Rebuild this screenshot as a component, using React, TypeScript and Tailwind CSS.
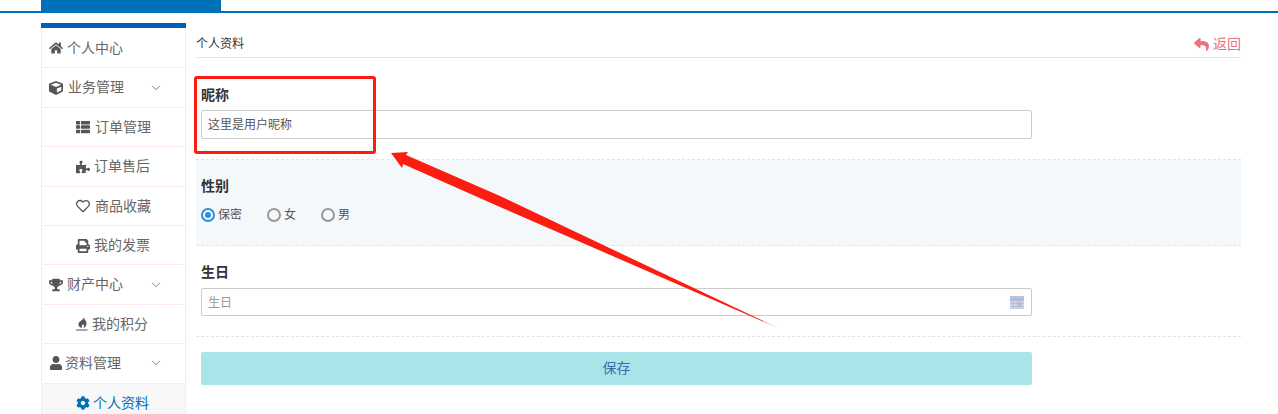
import React from 'react'
import { FaHome, FaCube, FaThList, FaPuzzlePiece, FaRegHeart, FaPrint, FaTrophy, FaUser, FaCog, FaReply } from 'react-icons/fa'
import { ChevronDown } from 'lucide-react'

function Flame() {
  return (
    <svg viewBox="0 0 12 14" className="h-[14px] w-[12px]" fill="#555">
      <path d="M8 0c-.2 2 2.500 3.500 2.500 6.500 0 2.500-1.500 4-3 4.500.8-1.500.5-3-.5-4-.3 1-1 1.200-1.200 2.400-.1.700.1 1.200.4 1.600C3.500 10.500 2 9 2.500 6.500 3 4 7.500 3 8 0z" />
      <rect x="0" y="12.500" width="11.500" height="1" />
    </svg>
  )
}

function MenuRow({ icon, box, label, sub, open, active }: { icon: React.ReactNode; box: string; label: string; sub?: boolean; open?: boolean; active?: boolean }) {
  return (
    <div className={`flex h-[39.4px] shrink-0 items-center border-b border-[#fde8ef] text-[14px] ${sub ? 'pl-[34px] pt-[1px]' : 'pl-[7px]'} ${active ? 'bg-[#f7f7f7] text-[#0070b8]' : 'text-[#666]'}`}>
      <span className={`flex shrink-0 text-[14px] ${active ? 'text-[#0070b8]' : 'text-[#555]'} ${box}`}>{icon}</span>
      <span>{label}</span>
      {open && <ChevronDown size={14} strokeWidth={1.4} className="ml-auto mr-[22px] text-[#666]" />}
    </div>
  )
}

function Sidebar() {
  return (
    <aside className="w-[145px] shrink-0">
      <div className="h-[5px] bg-[#0060b8]" />
      <div className="flex flex-col border-x border-[#fde8ef] pt-[1px]">
        <MenuRow icon={<FaHome />} box="w-[18px]" label="个人中心" />
        <MenuRow icon={<FaCube />} box="w-[19px]" label="业务管理" open />
        <MenuRow icon={<FaThList />} box="w-[19px]" label="订单管理" sub />
        <MenuRow icon={<FaPuzzlePiece />} box="w-[18px]" label="订单售后" sub />
        <MenuRow icon={<FaRegHeart />} box="w-[19px]" label="商品收藏" sub />
        <MenuRow icon={<FaPrint />} box="w-[18px]" label="我的发票" sub />
        <MenuRow icon={<FaTrophy />} box="w-[18px]" label="财产中心" open />
        <MenuRow icon={<Flame />} box="w-[16px]" label="我的积分" sub />
        <MenuRow icon={<FaUser />} box="w-[16px]" label="资料管理" open />
        <MenuRow icon={<FaCog />} box="w-[17px]" label="个人资料" sub active />
      </div>
    </aside>
  )
}

function Radio({ label, checked }: { label: string; checked?: boolean }) {
  return (
    <label className="flex items-center gap-[3px] text-[12px] text-[#555]">
      <span className={`flex h-[14px] w-[14px] items-center justify-center rounded-full border-2 ${checked ? 'border-[#2a8fdc]' : 'border-[#999]'}`}>
        {checked && <span className="h-[6px] w-[6px] rounded-full bg-[#2a8fdc]" />}
      </span>
      {label}
    </label>
  )
}

function CalendarIcon() {
  return (
    <svg viewBox="0 0 14 13" className="h-[13px] w-[14px]">
      <rect x="0" y="0" width="14" height="3" fill="#c4c4c8" />
      <rect x="0" y="2" width="14" height="3" fill="#a5bfe6" />
      <rect x="0" y="5" width="14" height="8" fill="#c9d6ea" />
      <path d="M0 7.500h14M0 10.500h14M3.500 5v8M7 5v8M10.500 5v8" stroke="#a9b8d0" strokeWidth="0.6" />
      <rect x="8" y="6" width="3.500" height="4" fill="#e8a8a0" />
    </svg>
  )
}

export default function App() {
  return (
    <div className="relative h-[414px] w-[1278px] overflow-hidden bg-white font-['Liberation_Sans','Noto_Sans_CJK_SC',sans-serif]">
      {/* top nav, scrolled off */}
      <div className="h-[13px] border-b-2 border-[#0070b8]">
        <div className="ml-[41px] flex h-[13px] w-[180px] items-end justify-center overflow-hidden bg-[#0070b8]">
          <span className="mb-[12px] shrink-0 text-[16px] font-bold leading-[18px] text-white">我的商城</span>
        </div>
      </div>

      <div className="mt-[10px] flex pl-[41px] pr-[37px]">
        <Sidebar />
        <main className="ml-[10px] flex-1">
          <div className="flex h-[35px] items-center justify-between border-b border-[#e5e5e5] pt-[8px] text-[12px] text-[#333]">
            <span>个人资料</span>
            <a className="flex items-center gap-[4px] text-[14px] text-[#e9737f]">
              <FaReply className="text-[15px]" />
              返回
            </a>
          </div>

          <section className="h-[102px] border-b border-dashed border-[#dfe5ea] px-[5px] pt-[28px]">
            <div className="text-[14px] font-bold leading-[18px] text-[#333]">昵称</div>
            <div className="mt-[6px] flex h-[29px] w-[831px] items-center rounded-[2px] border border-[#ccc] px-[6px] text-[12px] text-[#555]">这里是用户昵称</div>
          </section>

          <section className="h-[86px] border-b border-dashed border-[#dfe5ea] bg-[#f4f8fb] px-[5px] pt-[17px]">
            <div className="text-[14px] font-bold leading-[18px] text-[#333]">性别</div>
            <div className="mt-[11px] flex gap-[25px]">
              <Radio label="保密" checked />
              <Radio label="女" />
              <Radio label="男" />
            </div>
          </section>

          <section className="h-[91px] border-b border-dashed border-[#dfe5ea] px-[5px] pt-[17px]">
            <div className="text-[14px] font-bold leading-[18px] text-[#333]">生日</div>
            <div className="mt-[7px] flex h-[28px] w-[831px] items-center justify-between rounded-[2px] border border-[#ccc] pl-[6px] pr-[7px] pt-[1px] text-[12px] text-[#999]">
              生日
              <CalendarIcon />
            </div>
          </section>

          <div className="px-[5px] pt-[15px]">
            <button className="h-[33px] w-[831px] rounded-[2px] bg-[#a9e4e8] text-[14px] text-[#3a6ea5]">保存</button>
          </div>
        </main>
      </div>

      {/* annotation drawn over the screenshot */}
      <div className="absolute left-[194px] top-[76px] h-[78px] w-[182px] rounded-[3px] border-[3px] border-[#fb1d12]" />
      <svg className="absolute left-[385px] top-[145px]" width="400" height="190" viewBox="385 145 400 190">
        <polygon points="391,153 408,152 406,155 500,196 778,328 500,207 403,164 402,168" fill="#fb1d12" />
      </svg>
    </div>
  )
}
